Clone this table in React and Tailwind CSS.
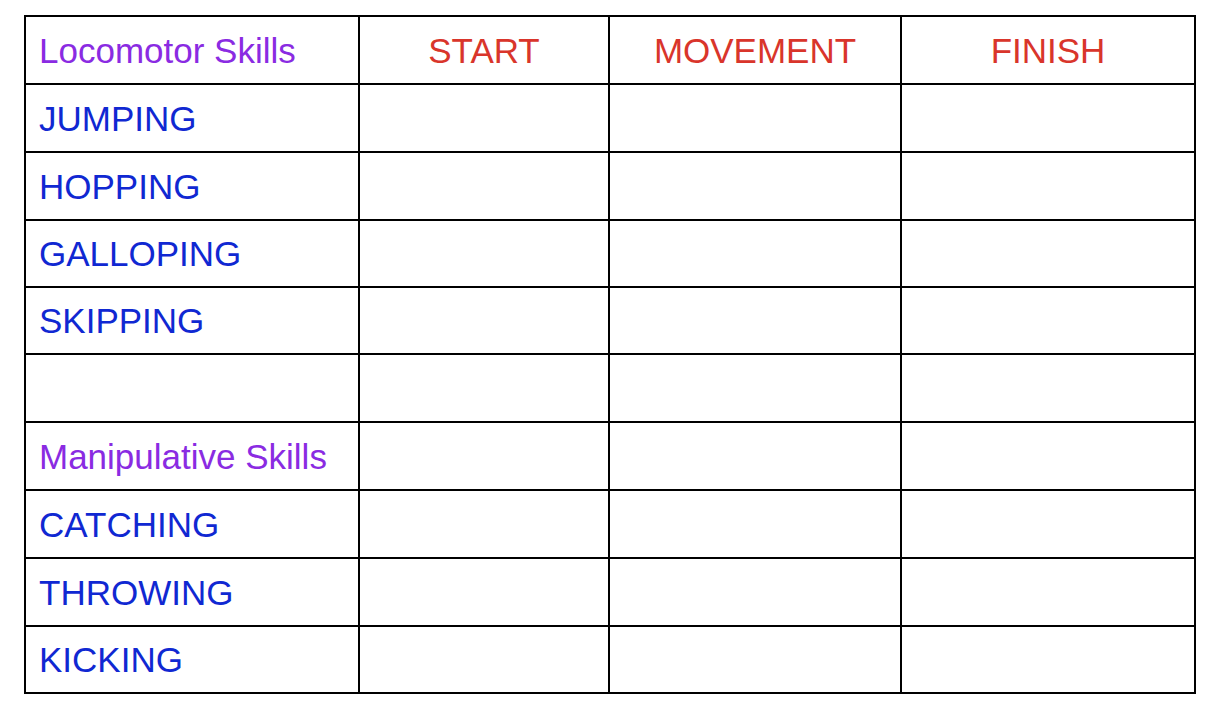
const header = ['START', 'MOVEMENT', 'FINISH']

const rows = [
  { label: 'JUMPING', kind: 'skill' },
  { label: 'HOPPING', kind: 'skill' },
  { label: 'GALLOPING', kind: 'skill' },
  { label: 'SKIPPING', kind: 'skill' },
  { label: '', kind: 'skill' },
  { label: 'Manipulative Skills', kind: 'group' },
  { label: 'CATCHING', kind: 'skill' },
  { label: 'THROWING', kind: 'skill' },
  { label: 'KICKING', kind: 'skill' }
]

export default function App() {
  return (
    <div className="w-[1222px] h-[712px] bg-white pt-[15px] pl-[24px]" style={{ fontFamily: '"Liberation Sans", Arial, sans-serif' }}>
      <div className="grid w-[1172px] border-l-2 border-t-2 border-black grid-cols-[334px_250px_292px_294px] grid-rows-[68px_68px_68px_67px_67px_68px_68px_68px_68px_67px] text-[35px] leading-none">
        {/* header row */}
        <div className="flex items-center pl-[13px] border-r-2 border-b-2 border-black text-[#8a2be2]">
          Locomotor Skills
        </div>
        {header.map((h) => (
          <div key={h} className="flex items-center justify-center border-r-2 border-b-2 border-black text-[#d9352b]">
            {h}
          </div>
        ))}

        {/* skill rows */}
        {rows.map((row, i) => (
          <div key={i} className="contents">
            <div
              className={`flex items-center pl-[13px] border-r-2 border-b-2 border-black ${
                row.kind === 'group' ? 'text-[#8a2be2]' : 'text-[#1028d2]'
              }`}
            >
              {row.label}
            </div>
            <div className="border-r-2 border-b-2 border-black" />
            <div className="border-r-2 border-b-2 border-black" />
            <div className="border-r-2 border-b-2 border-black" />
          </div>
        ))}
      </div>
    </div>
  )
}
